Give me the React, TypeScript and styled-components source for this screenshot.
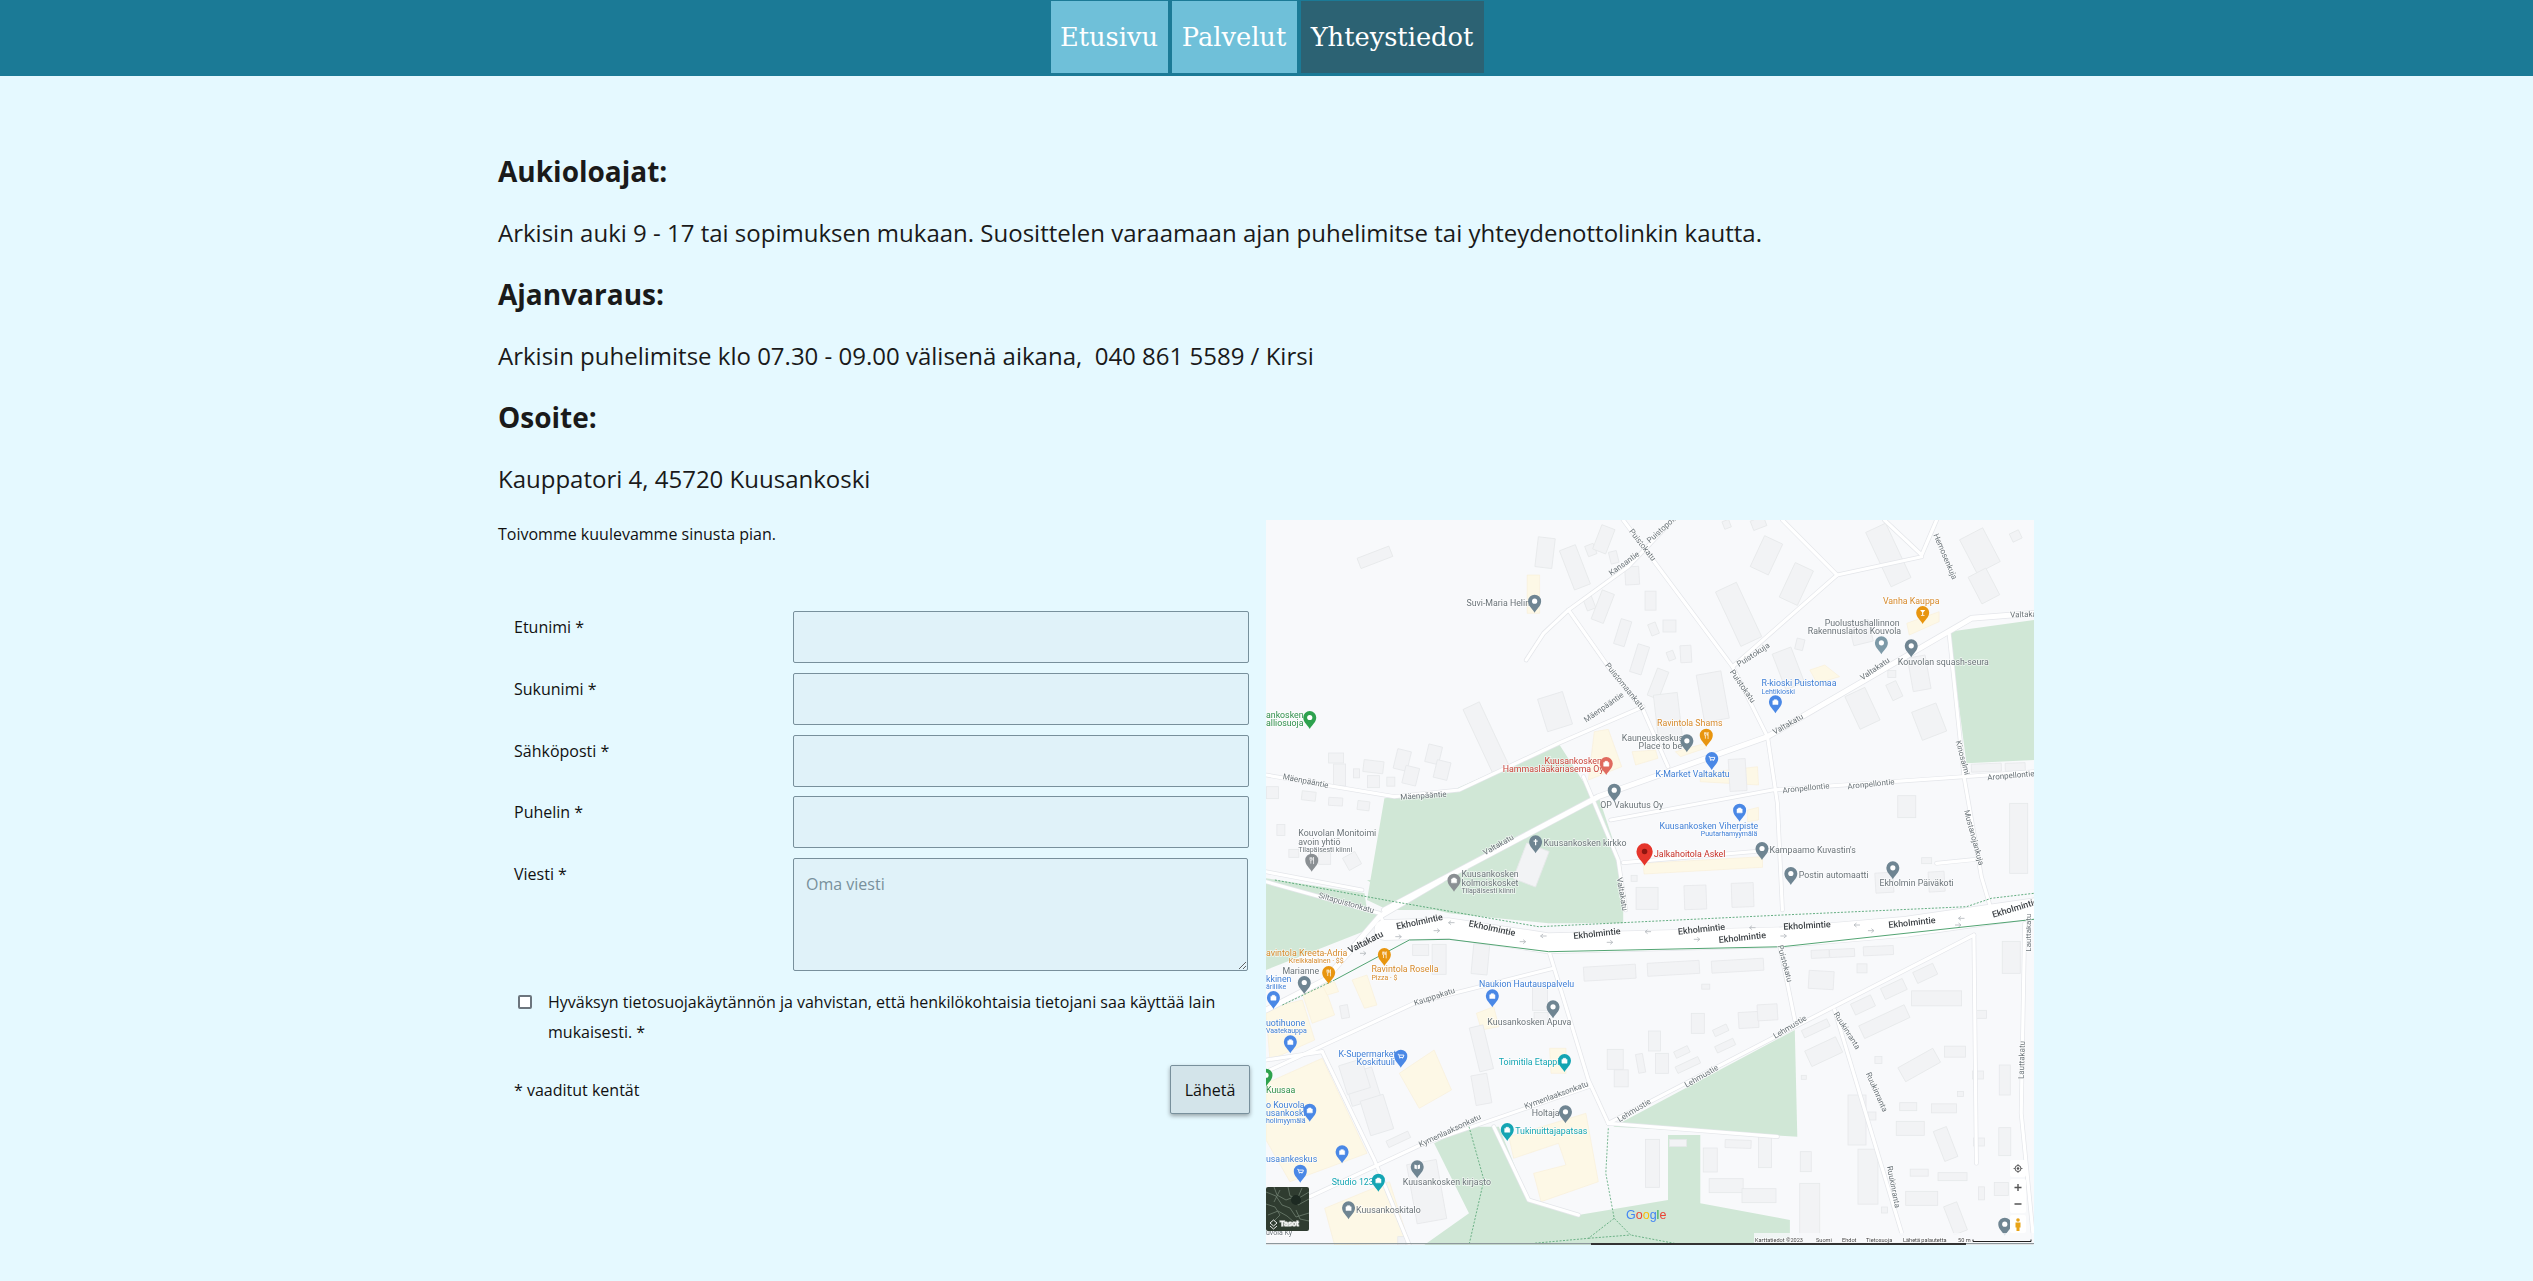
import React from "react";
import styled, { createGlobalStyle } from "styled-components";

const Global = createGlobalStyle`
  html, body { margin: 0; padding: 0; background: #e5f9ff; }
  body { font-family: "Open Sans", "Noto Sans", sans-serif; color: #111; }
`;

const Header = styled.header`
  height: 76px;
  background: #1b7a96;
  display: flex;
  justify-content: center;
  align-items: flex-start;
  gap: 4px;
  padding: 1px 0 0 1px;
  box-sizing: border-box;
`;
const NavItem = styled.a<{ $active?: boolean; $w: number }>`
  width: ${(p) => p.$w}px;
  height: 72px;
  display: flex;
  align-items: center;
  justify-content: center;
  background: ${(p) => (p.$active ? "#2c6273" : "#6fc0d9")};
  color: #fff;
  font-family: "DejaVu Serif", "Liberation Serif", serif;
  font-size: 25.7px;
`;
const Main = styled.main`
  width: 1536px;
  margin: 0 0 0 498px;
  padding-top: 80px;
`;
const Heading = styled.h3`
  margin: 0 0 31.5px;
  font-size: 28px;
  line-height: 30px;
  font-weight: 700;
  color: #1a1a1a;
`;
const Para = styled.p`
  margin: 0 0 31.5px;
  font-size: 24px;
  line-height: 30px;
  color: #1a1a1a;
`;
const Columns = styled.div`
  display: grid;
  grid-template-columns: 768px 768px;
  margin-top: -5px;
`;
const FormCol = styled.div`
  padding-top: 0;
`;
const Lead = styled.p`
  margin: 0;
  font-size: 16px;
  line-height: 28px;
`;
const Form = styled.form`
  margin-top: 63px;
  padding-left: 16px;
  width: 736px;
`;
const Field = styled.div`
  display: grid;
  grid-template-columns: 279px 456px;
  margin-bottom: 9.8px;
`;
const Label = styled.label`
  font-size: 16px;
  line-height: 26px;
  padding-top: 3px;
`;
const Input = styled.input`
  box-sizing: border-box;
  height: 52px;
  width: 456px;
  background: #e0f2f9;
  border: 1px solid #78909c;
  border-radius: 2px;
  padding: 0 12px;
`;
const Area = styled.textarea`
  box-sizing: border-box;
  height: 113px;
  width: 455px;
  background: #e0f2f9;
  border: 1px solid #78909c;
  border-radius: 2px;
  padding: 12px;
  font-family: "Open Sans", "Noto Sans", sans-serif;
  font-size: 16px;
  line-height: 26px;
  display: block;
  &::placeholder { color: #78909c; }
`;
const Consent = styled.div`
  display: flex;
  gap: 16px;
  margin-top: 16px;
  font-size: 16px;
  line-height: 30px;
  width: 720px;
`;
const Check = styled.input`
  appearance: none;
  box-sizing: border-box;
  flex: none;
  width: 14px;
  height: 14px;
  margin: 8px 0 0 4px;
  border: 2px solid #6c757d;
  border-radius: 2px;
  background: #fff;
`;
const FormFoot = styled.div`
  display: flex;
  justify-content: space-between;
  align-items: center;
  margin-top: 18px;
  width: 736px;
  font-size: 16px;
`;
const Send = styled.button`
  box-sizing: border-box;
  width: 80px;
  height: 49px;
  background: #d3e4ea;
  border: 1px solid #78909c;
  border-radius: 2px;
  box-shadow: 0 2px 4px rgba(0, 0, 0, 0.35);
  font-family: "Open Sans", "Noto Sans", sans-serif;
  font-size: 16px;
  color: #111;
`;
const MapFrame = styled.div`
  width: 768px;
  height: 725px;
  background: #f8f9fb;
  overflow: hidden;
`;
const MapSvg = styled.svg`
  display: block;
  font-family: Roboto, "Liberation Sans", sans-serif;
  filter: blur(0.3px);
`;
const Tag = styled.text<{ $c: string; $s: number; $w?: number }>`
  fill: ${(p) => p.$c};
  font-size: ${(p) => p.$s}px;
  font-weight: ${(p) => p.$w ?? 400};
  dominant-baseline: central;
  paint-order: stroke;
  stroke: rgba(255, 255, 255, 0.65);
  stroke-width: 1.4px;
`;

type P = [number, number];
const z4 = (x: number, y: number): P => [x / 2.01 - 6, y / 3 - 10];
const z5 = (x: number, y: number): P => [x / 2.01 - 6, y / 3 + 360];
const pts = (f: (x: number, y: number) => P, a: number[]) => {
  const o: string[] = [];
  for (let i = 0; i < a.length; i += 2) o.push(f(a[i], a[i + 1]).map((n) => n.toFixed(1)).join(","));
  return o.join(" ");
};
const trueAngle = (a: number) => (Math.atan(Math.tan((a * Math.PI) / 180) * (2 / 3)) * 180) / Math.PI;

const GREEN = "#d0e7d6";
const greens4 = [
  [250, 865, 380, 845, 600, 700, 670, 862, 250, 1195, 215, 1170],
  [682, 866, 725, 1060, 735, 1200, 258, 1200],
  [1385, 365, 1556, 330, 1556, 750, 1420, 760],
  [12, 1105, 210, 1150, 215, 1200, 12, 1200],
];
const greens5 = [
  [215, 0, 730, 0, 730, 130, 580, 130, 380, 100, 270, 60],
  [12, 20, 240, 100, 250, 130, 12, 270],
  [710, 740, 1075, 450, 1080, 770],
  [350, 790, 420, 740, 480, 740, 540, 960, 640, 1005, 820, 960, 820, 765, 885, 765, 885, 970, 1065, 1020, 1065, 1095, 330, 1095, 420, 1000],
];
const yellows4 = [
  [537, 195, 562, 195, 562, 310, 537, 310],
  [1300, 340, 1365, 305, 1365, 335, 1305, 375],
  [1105, 480, 1135, 465, 1165, 500, 1120, 520],
  [672, 665, 700, 658, 727, 770, 660, 810],
  [748, 725, 795, 720, 800, 745, 755, 765],
  [835, 725, 895, 700, 895, 715, 845, 740],
  [885, 790, 1000, 770, 1002, 825, 885, 815],
  [770, 1060, 1010, 1040, 1010, 1072, 772, 1092],
  [980, 900, 1002, 892, 1002, 930, 980, 935],
];
const yellows5 = [
  [45, 375, 85, 360, 110, 480, 20, 540, 12, 400],
  [85, 340, 130, 320, 150, 405, 105, 430],
  [185, 300, 215, 285, 235, 375, 210, 385],
  [125, 315, 150, 305, 158, 335, 135, 345],
  [280, 580, 350, 510, 385, 630, 320, 685],
  [435, 400, 470, 380, 480, 440, 445, 450],
  [582, 505, 615, 505, 615, 580, 585, 580],
  [12, 610, 125, 535, 215, 820, 60, 905, 12, 780],
  [500, 770, 655, 700, 680, 905, 565, 965, 550, 880, 615, 855, 600, 790, 510, 835],
  [130, 985, 260, 905, 300, 1090, 150, 1095],
];
const thin4 = [
  [730, 30, 950, 470, 1020, 680, 1040, 880, 1050, 1200],
  [535, 450, 570, 370, 620, 300, 740, 170, 830, 30],
  [620, 300, 700, 470, 770, 600, 820, 770],
  [950, 470, 1160, 195, 1330, 140],
  [1050, 30, 1160, 195],
  [1255, 30, 1330, 135, 1360, 30],
  [12, 795, 270, 860, 400, 840, 600, 700, 770, 590],
  [705, 930, 1030, 840, 1415, 800, 1556, 785],
  [1385, 370, 1415, 800, 1450, 1100, 1470, 1200],
  [650, 800, 720, 1050, 735, 1200],
  [730, 1058, 1030, 1020],
  [1360, 1060, 1440, 1048],
  [12, 1085, 205, 1140],
];
const thin5 = [
  [12, 5, 240, 100, 250, 135],
  [580, 210, 660, 600, 700, 730],
  [20, 570, 310, 370, 590, 265],
  [100, 950, 330, 790, 660, 620],
  [700, 730, 1075, 440, 1435, 165],
  [700, 730, 1040, 770],
  [1155, 390, 1290, 1060],
  [1435, 165, 1440, 850],
  [1045, 200, 1075, 420],
  [1537, 130, 1530, 700, 1556, 1095],
  [125, 515, 230, 840, 300, 1095],
  [470, 740, 540, 960, 640, 1005],
  [12, 540, 125, 515],
];
const blds4: number[][] = [
  [231,142,34,11,-30],[573,128,17,30,10],[633,172,17,42,-30],[665,120,9,11,-30],[691,88,14,26,30],[711,142,8,12,-20],[748,197,14,18,-5],[785,272,11,19,0],[662,280,9,13,-30],[689,290,13,31,30],[729,368,11,26,25],[791,357,8,12,-30],[823,348,13,12,0],[763,448,12,29,25],[826,437,7,9,-30],[856,432,11,17,-5],[800,521,12,29,30],[910,560,25,48,-15],[820,620,24,46,-10],[962,313,23,60,-35],[1018,136,20,34,35],[1078,222,20,38,35],[1263,135,22,60,-35],[1447,122,26,38,-38],[1455,228,20,30,-38],[1519,78,10,9,-35],[1002,40,14,10,-30],[938,43,7,8,-30],[1062,475,20,38,-30],[1085,403,8,11,20],[1208,368,20,22,-20],[1270,492,8,7,0],[1275,542,11,17,-35],[1211,595,22,36,-35],[1345,635,26,30,-30],[1325,490,18,34,-15],[455,685,18,72,-35],[593,605,26,34,-25],[153,744,15,10,0],[160,795,12,22,0],[286,750,14,20,20],[349,733,14,18,20],[366,780,14,18,20],[303,797,14,18,20],[228,770,20,12,10],[228,815,12,12,0],[263,815,8,9,0],[194,790,6,9,0],[25,848,12,12,0],[98,858,14,9,10],[152,875,14,8,5],[208,887,12,9,10],[42,960,8,11,0],[68,1030,10,8,0],[185,1053,14,14,-40],[130,1045,12,12,0],[1300,890,18,22,0],[1525,985,18,70,0],[1460,773,30,8,-3],[1518,771,20,8,-3],[960,795,17,32,-5],[1340,1052,10,6,0],[1255,1118,18,20,-5],[1360,1115,16,20,-5],[778,1165,22,22,0],[875,1162,22,24,-3],[970,1155,22,24,-3],[752,1105,6,6,0],[545,1065,24,38,30],
];
const blds5: number[][] = [
  [323,210,16,11,0],[360,238,14,30,0],[443,238,16,30,8],[703,278,52,14,-5],[831,265,52,13,-5],[960,257,52,12,-5],[1126,222,18,8,-4],[1170,219,25,8,-4],[1243,212,30,9,-4],[1210,265,10,9,0],[1128,300,25,18,5],[1510,232,18,32,0],[1337,280,22,12,-35],[1274,327,24,12,-35],[1212,375,22,12,-35],[896,320,8,5,0],[880,430,13,20,0],[926,451,15,7,-35],[982,420,20,16,-5],[1020,397,20,16,-5],[935,497,20,7,-35],[848,516,15,7,-35],[793,483,12,20,0],[860,555,25,7,-35],[808,550,13,20,0],[765,550,7,19,-15],[714,538,16,20,0],[726,595,14,17,0],[1117,445,28,8,-35],[1133,515,34,17,-35],[1255,425,50,14,-35],[1360,355,50,15,0],[1449,403,11,8,0],[1397,515,21,11,0],[1243,540,7,7,0],[1325,555,40,16,-40],[1443,585,11,8,0],[1497,600,11,30,0],[1093,592,5,4,0],[1408,642,6,5,0],[1303,680,17,8,0],[1375,685,25,9,0],[1200,720,18,50,0],[1230,708,8,8,0],[1307,745,28,14,0],[1378,792,14,32,-30],[1445,786,11,8,0],[1497,785,12,28,0],[961,792,26,8,3],[840,789,17,7,0],[789,850,14,48,0],[905,840,14,24,0],[1015,815,13,32,0],[1097,845,11,20,0],[937,917,34,14,0],[1003,947,34,14,0],[1222,890,20,55,0],[1255,990,6,6,0],[1330,955,32,14,0],[1392,890,29,8,0],[1325,878,18,7,0],[1450,940,6,13,0],[1490,927,14,13,0],[1398,1015,14,30,-30],[1105,1000,20,60,0],[205,620,30,32,-25],[235,705,24,36,-25],[190,590,24,30,-25],[445,628,16,30,-15],[445,505,14,45,-20],[563,355,15,24,0],[565,415,14,12,0],[278,778,24,7,-35],[170,395,8,13,-15],[335,935,30,60,-15],[285,1085,8,10,0],
];
type Pin = [number, number, string, string?];
const G = "#6f8592", B = "#4a88e6", O = "#e8950f", T = "#14a5b3", R = "#e06a5f", L = "#7d9aa8", D = "#2ea24e";
const pins4: Pin[] = [
  [552, 278, G],[1332, 312, O, "glass"],[1249, 403, L],[1309, 412, G],[1036, 580, B, "bag"],[897, 680, O, "fork"],[858, 697, G],[908, 750, B, "cart"],[696, 765, R, "bag"],[712, 845, G],[964, 905, B, "bag"],[554, 1000, G, "cross"],[1009, 1020, G],[1067, 1095, G],[1272, 1078, G],[104, 1055, "#8a8f93", "fork"],[390, 1115, "#8a8f93", "bag"],[100, 627, D],
];
const pins5: Pin[] = [
  [250, 228, O, "fork"],[138, 282, O, "fork"],[89, 312, G],[27, 357, B, "bag"],[467, 352, B, "bag"],[589, 385, G],[61, 490, B, "bag"],[283, 533, B, "cart"],[612, 546, T, "bag"],[12, 590, D],[100, 695, B, "bag"],[614, 700, G],[497, 753, T, "bag"],[165, 820, B, "bag"],[81, 878, B, "cart"],[238, 905, T, "bag"],[316, 865, G, "book"],[178, 988, G, "bag"],[1497, 1037, G],
];
type Lb = [number, number, string, string, number?, number?];
const GT = "#6b7479", BT = "#3f7fd6", OT = "#d68a2c", RT = "#c9453c", ET = "#3e4347";
const labels4: Lb[] = [
  [415, 278, "Suvi-Maria Helin", GT],[1252, 272, "Vanha Kauppa", OT],[1135, 339, "Puolustushallinnon", GT],[1101, 363, "Rakennuslaitos Kouvola", GT],[1282, 455, "Kouvolan squash-seura", GT],[1008, 520, "R-kioski Puistomaa", BT],[1008, 545, "Lehtikioski", BT, 7],[798, 640, "Ravintola Shams", OT],[727, 684, "Kauneuskeskus", GT],[761, 709, "Place to be", GT],[572, 752, "Kuusankosken", RT],[488, 777, "Hammaslääkäriasema Oy", RT],[795, 792, "K-Market Valtakatu", BT],[684, 885, "OP Vakuutus Oy", GT],[803, 947, "Kuusankosken Viherpiste", BT],[886, 971, "Puutarhamyymälä", BT, 7],[570, 1000, "Kuusankosken kirkko", GT],[792, 1032, "Jalkahoitola Askel", "#c62f26"],[1024, 1021, "Kampaamo Kuvastin's", GT],[1083, 1096, "Postin automaatti", GT],[1245, 1120, "Ekholmin Päiväkoti", GT],[77, 969, "Kouvolan Monitoimi", GT],[77, 995, "avoin yhtiö", GT],[77, 1019, "Tilapäisesti kiinni", GT, 7],[405, 1092, "Kuusankosken", GT],[405, 1118, "kolmoiskosket", GT],[405, 1142, "Tilapäisesti kiinni", GT, 7],[12, 614, "ankosken", "#2f8f4a"],[12, 640, "alliosuoja", "#2f8f4a"],
  [745, 60, "Puistokatu", GT, 8, 52],[780, 95, "Puistopolku", GT, 8, -42],[703, 192, "Kansantie", GT, 8, -36],[960, 465, "Puistokuja", GT, 8, -33],[697, 462, "Puistomaankatu", GT, 8, 51],[948, 482, "Puistokatu", GT, 8, 55],[653, 632, "Mäenpääntie", GT, 8, -35],[1032, 668, "Valtakatu", GT, 8, -30],[1208, 505, "Valtakatu", GT, 8, -34],[1508, 315, "Valtakatu", GT, 8, -2],[1358, 72, "Hemosenkuja", GT, 8, 67],[282, 862, "Mäenpääntie", GT, 8, -4],[46, 800, "Mäenpääntie", GT, 8, 11],[1050, 842, "Aronpellontie", GT, 8, -6],[1181, 830, "Aronpellontie", GT, 8, -6],[1462, 803, "Aronpellontie", GT, 8, -5],[1403, 692, "Kinosalmi", GT, 8, 75],[1420, 900, "Mustanojankuja", GT, 8, 75],[450, 1030, "Valtakatu", GT, 8, -30],[722, 1103, "Valtakatu", GT, 8, 80],
];
const labels5: Lb[] = [
  [274, 140, "Ekholmintie", ET, 9, -12],[420, 130, "Ekholmintie", ET, 9, 12],[630, 168, "Ekholmintie", ET, 9, -6],[840, 155, "Ekholmintie", ET, 9, -6],[922, 180, "Ekholmintie", ET, 9, -6],[1052, 140, "Ekholmintie", ET, 9, -3],[1263, 135, "Ekholmintie", ET, 9, -6],[1472, 105, "Ekholmintie", ET, 9, -17],[178, 212, "Valtakatu", ET, 9, -27],
  [118, 45, "Siltapuistonkatu", GT, 8, 16],[1045, 195, "Puistokatu", GT, 8, 75],[310, 370, "Kauppakatu", GT, 8, -18],[532, 680, "Kymenlaaksonkatu", GT, 8, -20],[320, 795, "Kymenlaaksonkatu", GT, 8, -25],[1033, 470, "Lehmustie", GT, 8, -31],[855, 617, "Lehmustie", GT, 8, -30],[720, 720, "Lehmustie", GT, 8, -31],[1157, 398, "Ruukinranta", GT, 8, 58],[1222, 578, "Ruukinranta", GT, 8, 66],[1265, 858, "Ruukinranta", GT, 8, 79],[1530, 597, "Lauttakatu", GT, 8, -88],[1545, 215, "Lauttakatu", GT, 8, -90],
  [12, 220, "avintola Kreeta-Adria", OT],[58, 244, "Kreikkalainen · $$", OT, 7],[45, 272, "Marianne", GT],[224, 268, "Ravintola Rosella", OT],[224, 293, "Pizza · $", OT, 7],[12, 296, "kkinen", BT],[12, 320, "äriliike", BT, 7],[440, 313, "Naukion Hautauspalvelu", BT],[457, 427, "Kuusankosken Apuva", GT],[12, 429, "uotihuone", BT],[12, 453, "Vaatekauppa", BT, 7],[158, 521, "K-Supermarket", BT],[194, 546, "Koskituuli", BT],[480, 547, "Toimitila Etappi", T],[12, 630, "Kuusaa", "#2f8f4a"],[12, 675, "o Kouvola", BT],[12, 700, "usankoski", BT],[12, 724, "holimyymälä", BT, 7],[546, 700, "Holtaja", GT],[513, 754, "Tukinuittajapatsas", T],[12, 837, "usaankeskus", BT],[144, 905, "Studio 123", T],[287, 906, "Kuusankosken kirjasto", GT],[193, 989, "Kuusankoskitalo", GT],[12, 1058, "uvola Ky", GT, 7],
];
const arrowsLeft = [[385, 128], [570, 168], [780, 155], [990, 143], [1200, 135], [1410, 115]];
const arrowsRight = [[355, 152], [528, 185], [703, 187], [878, 178], [1052, 168], [1228, 152], [1403, 135], [207, 220], [278, 170]];

const Building = ({ b, f }: { b: number[]; f: (x: number, y: number) => P }) => {
  const [x, y] = f(b[0], b[1]);
  return <rect x={x - b[2] / 2} y={y - b[3] / 2} width={b[2]} height={b[3]} fill="#f2f3f5" stroke="#e6e8ea" strokeWidth={0.8} transform={`rotate(${trueAngle(b[4])} ${x} ${y})`} />;
};
const PinGlyph = ({ kind }: { kind?: string }) => {
  switch (kind) {
    case "bag":
      return <path d="M-2.6-2.6h5.2v3.8h-5.2zM-1.3-2.6v-1.1h2.6v1.1" fill="#fff" stroke="#fff" strokeWidth={0.5} />;
    case "cart":
      return <path d="M-3-3.4h1l.8 3.2h3.6l.7-2.4h-4.6M-1-.2v1M1.6-.2v1" fill="none" stroke="#fff" strokeWidth={0.9} />;
    case "fork":
      return <path d="M-1.7-4.4v2.4q0 1 .8 1v3M-.9-4.4v2M-.1-4.4v2.4q0 1-.8 1M1.8-4.4v6.8M1.8-4.4q-1 1-.6 3h.6" fill="none" stroke="#fff" strokeWidth={0.7} />;
    case "glass":
      return <path d="M-2.6-4h5.2l-2.1 2.6v2.4h1.3v.7h-3.6v-.7h1.3v-2.4z" fill="#fff" />;
    case "cross":
      return <path d="M0-4.4v6.4M-2-2.2h4" stroke="#fff" strokeWidth={1.2} fill="none" />;
    case "book":
      return <path d="M-2.8-3.8l2.4.8v4l-2.4-.8zM2.8-3.8l-2.4.8v4l2.4-.8z" fill="#fff" />;
    default:
      return <circle cy={-1.5} r={2.6} fill="#fff" />;
  }
};
const PinMark = ({ p, f }: { p: Pin; f: (x: number, y: number) => P }) => {
  const [x, y] = f(p[0], p[1]);
  return (
    <g transform={`translate(${x} ${y})`}>
      <path d="M0 10C-1.5 6.5-6.5 3.5-6.5-1.5a6.5 6.5 0 0 1 13 0C6.5 3.5 1.5 6.5 0 10z" fill={p[2]} />
      <PinGlyph kind={p[3]} />
    </g>
  );
};
const Label2 = ({ l, f }: { l: Lb; f: (x: number, y: number) => P }) => {
  const [x, y] = f(l[0], l[1]);
  return (
    <Tag x={x} y={y} $c={l[3]} $s={l[4] ?? 8.8} $w={l[4] === 9 ? 500 : 400} transform={l[5] ? `rotate(${l[5]} ${x} ${y})` : undefined}>
      {l[2]}
    </Tag>
  );
};
const Road = ({ d, f, w = 3.2 }: { d: number[]; f: (x: number, y: number) => P; w?: number }) => (
  <polyline points={pts(f, d)} fill="none" stroke="#fff" strokeWidth={w} strokeLinejoin="round" strokeLinecap="round" />
);
const RoadCase = ({ d, f, w = 3.2 }: { d: number[]; f: (x: number, y: number) => P; w?: number }) => (
  <polyline points={pts(f, d)} fill="none" stroke="#e4e6ea" strokeWidth={w + 1.4} strokeLinejoin="round" strokeLinecap="round" />
);
const Arrow = ({ at, dir }: { at: number[]; dir: number }) => {
  const [x, y] = z5(at[0], at[1]);
  return <path transform={`translate(${x} ${y}) scale(${dir} 1)`} d="M-3 0h6M0.5-2l2.5 2-2.5 2" fill="none" stroke="#b9bdc2" strokeWidth={0.9} />;
};

const valta4 = [250, 1200, 680, 860, 1020, 680, 1430, 325, 1556, 310];
const valta5 = [365, 0, 240, 110, 130, 300, 12, 390];
const ekhol = [250, 150, 380, 145, 580, 190, 1050, 172, 1300, 140, 1556, 85];
const satellite = [
  "M0 672l10 4 6 9 8 3 6 9 13-4", "M8 667l3 8 9 5 8-3 4 8 11-6", "M0 684l9 3 5 8-6 6", "M22 667l2 9 9 2 10-6",
  "M2 695l10-4 9 5 7 6", "M30 690l4 9 9 2", "M14 670l-6 12", "M36 668l-6 14",
];

const MapArt = () => (
  <MapSvg width={768} height={725} viewBox="0 0 768 725">
    <rect width={768} height={725} fill="#f8f9fb" />
    {greens4.map((g, i) => <polygon key={i} points={pts(z4, g)} fill={GREEN} />)}
    {greens5.map((g, i) => <polygon key={i} points={pts(z5, g)} fill={GREEN} />)}
    {yellows4.map((g, i) => <polygon key={i} points={pts(z4, g)} fill="#fdf8e6" stroke="#f8efd6" strokeWidth={0.6} />)}
    {yellows5.map((g, i) => <polygon key={i} points={pts(z5, g)} fill="#fdf8e6" stroke="#f8efd6" strokeWidth={0.6} />)}
    {blds4.map((b, i) => <Building key={i} b={b} f={z4} />)}
    {blds5.map((b, i) => <Building key={i} b={b} f={z5} />)}
    {thin4.map((d, i) => <RoadCase key={i} d={d} f={z4} />)}
    {thin5.map((d, i) => <RoadCase key={i} d={d} f={z5} />)}
    <RoadCase d={valta4} f={z4} w={5} />
    <RoadCase d={valta5} f={z5} w={5} />
    <RoadCase d={ekhol} f={z5} w={20} />
    {thin4.map((d, i) => <Road key={i} d={d} f={z4} />)}
    {thin5.map((d, i) => <Road key={i} d={d} f={z5} />)}
    <Road d={valta4} f={z4} w={5} />
    <Road d={valta5} f={z5} w={5} />
    <Road d={ekhol} f={z5} w={20} />
    {arrowsLeft.map((a, i) => <Arrow key={i} at={a} dir={-1} />)}
    {arrowsRight.map((a, i) => <Arrow key={i} at={a} dir={1} />)}
    <polyline points={pts(z5, [30, 0, 270, 65, 560, 140, 1050, 105, 1420, 80, 1470, 55, 1556, 40])} fill="none" stroke="#3f9a63" strokeWidth={0.8} strokeDasharray="2 1.5" />
    <polyline points={pts(z5, [150, 300, 300, 180, 380, 178, 580, 215, 1050, 200, 1556, 118])} fill="none" stroke="#3f9a63" strokeWidth={0.9} />
    <polyline points={pts(z5, [45, 375, 150, 300])} fill="none" stroke="#3f9a63" strokeWidth={0.8} strokeDasharray="2 1.5" />
    <polyline points={pts(z5, [420, 740, 450, 900, 420, 1095])} fill="none" stroke="#3f9a63" strokeWidth={0.7} strokeDasharray="2 1.5" />
    <polyline points={pts(z5, [700, 745, 695, 880, 712, 1015, 660, 1075, 550, 1090])} fill="none" stroke="#3f9a63" strokeWidth={0.7} strokeDasharray="2 1.5" />
    <polyline points={pts(z5, [712, 1015, 745, 1065, 850, 1095])} fill="none" stroke="#3f9a63" strokeWidth={0.7} strokeDasharray="2 1.5" />
    <polyline points={pts(z5, [660, 1075, 745, 1065])} fill="none" stroke="#3f9a63" strokeWidth={0.7} strokeDasharray="2 1.5" />
    {labels4.map((l, i) => <Label2 key={i} l={l} f={z4} />)}
    {labels5.map((l, i) => <Label2 key={i} l={l} f={z5} />)}
    {pins4.map((p, i) => <PinMark key={i} p={p} f={z4} />)}
    {pins5.map((p, i) => <PinMark key={i} p={p} f={z5} />)}
    <g transform={`translate(${z4(773, 1030)[0]} ${z4(773, 1030)[1]}) scale(1.25)`}>
      <path d="M0 10C-1.5 6.5-6.5 3.5-6.5-1.5a6.5 6.5 0 0 1 13 0C6.5 3.5 1.5 6.5 0 10z" fill="#e5352b" />
      <circle cy={-1.5} r={2.2} fill="#8f1510" />
    </g>
    <g>
      <rect x={0} y={667} width={43} height={44} rx={2} fill="#2f3c30" />
      {satellite.map((d, i) => <path key={i} d={d} stroke="#6f7f70" strokeWidth={1} fill="none" opacity={0.8} />)}
      <circle cx={30} cy={680} r={5} fill="#1d2a22" />
      <path d="M4 703l3.5-3 3.5 3-3.5 3zM4 706l3.5 3 3.5-3" stroke="#fff" strokeWidth={0.9} fill="none" />
      <Tag x={14} y={703} $c="#fff" $s={7.5} $w={500}>Tasot</Tag>
    </g>
    <text x={360} y={699} fontFamily="'Liberation Sans', sans-serif" fontSize={12.5}>
      <tspan fill="#4285f4">G</tspan><tspan fill="#ea4335">o</tspan><tspan fill="#fbbc05">o</tspan><tspan fill="#4285f4">g</tspan><tspan fill="#34a853">l</tspan><tspan fill="#ea4335">e</tspan>
    </text>
    <rect x={488} y={713} width={280} height={10} fill="#f8f9fb" opacity={0.8} />
    <g>
      <Tag x={489} y={720} $c="#444" $s={5.6}>Karttatiedot ©2023</Tag>
      <Tag x={550} y={720} $c="#444" $s={5.6}>Suomi</Tag>
      <Tag x={576} y={720} $c="#444" $s={5.6}>Ehdot</Tag>
      <Tag x={600} y={720} $c="#444" $s={5.6}>Tietosuoja</Tag>
      <Tag x={637} y={720} $c="#444" $s={5.6}>Lähetä palautetta</Tag>
      <Tag x={692} y={720} $c="#444" $s={5.6}>50 m</Tag>
      <path d="M707 719.5v2h58v-2" fill="none" stroke="#222" strokeWidth={1} />
    </g>
    <g>
      <rect x={744} y={640} width={16} height={17} rx={2} fill="#fff" />
      <circle cx={752} cy={648.5} r={3} fill="none" stroke="#555" strokeWidth={1} />
      <circle cx={752} cy={648.5} r={1.3} fill="#555" />
      <path d="M752 644v2M752 651v2M747.5 648.5h2M754.5 648.5h2" stroke="#555" strokeWidth={0.8} />
      <rect x={744} y={659} width={16} height={34} rx={2} fill="#fff" />
      <path d="M748.5 667.5h7M752 664v7M748.5 684h7" stroke="#555" strokeWidth={1.4} />
      <rect x={744} y={695} width={16} height={18} rx={2} fill="#fff" />
      <circle cx={752} cy={700} r={1.8} fill="#e8a317" />
      <path d="M749.5 702.5h5v5h-1v3.5h-3v-3.5h-1z" fill="#e8a317" />
    </g>
    <rect x={0} y={723} width={768} height={1.2} fill="#8d989c" />
    <rect x={325} y={723} width={375} height={2} fill="#333" />
  </MapSvg>
);

export default function App() {
  return (
    <>
      <Global />
      <Header>
        <NavItem $w={117}>Etusivu</NavItem>
        <NavItem $w={125}>Palvelut</NavItem>
        <NavItem $w={183} $active>Yhteystiedot</NavItem>
      </Header>
      <Main>
        <Heading>Aukioloajat:</Heading>
        <Para>Arkisin auki 9 - 17 tai sopimuksen mukaan. Suosittelen varaamaan ajan puhelimitse tai yhteydenottolinkin kautta.</Para>
        <Heading>Ajanvaraus:</Heading>
        <Para>Arkisin puhelimitse klo 07.30 - 09.00 välisenä aikana,&nbsp; 040 861 5589 / Kirsi</Para>
        <Heading>Osoite:</Heading>
        <Para>Kauppatori 4, 45720 Kuusankoski</Para>
        <Columns>
          <FormCol>
            <Lead>Toivomme kuulevamme sinusta pian.</Lead>
            <Form>
              <Field><Label>Etunimi *</Label><Input /></Field>
              <Field><Label>Sukunimi *</Label><Input /></Field>
              <Field><Label>Sähköposti *</Label><Input /></Field>
              <Field><Label>Puhelin *</Label><Input /></Field>
              <Field><Label>Viesti *</Label><Area placeholder="Oma viesti" /></Field>
              <Consent>
                <Check type="checkbox" />
                <span>Hyväksyn tietosuojakäytännön ja vahvistan, että henkilökohtaisia tietojani saa käyttää lain mukaisesti. *</span>
              </Consent>
              <FormFoot>
                <span>* vaaditut kentät</span>
                <Send type="button">Lähetä</Send>
              </FormFoot>
            </Form>
          </FormCol>
          <MapFrame><MapArt /></MapFrame>
        </Columns>
      </Main>
    </>
  );
}
